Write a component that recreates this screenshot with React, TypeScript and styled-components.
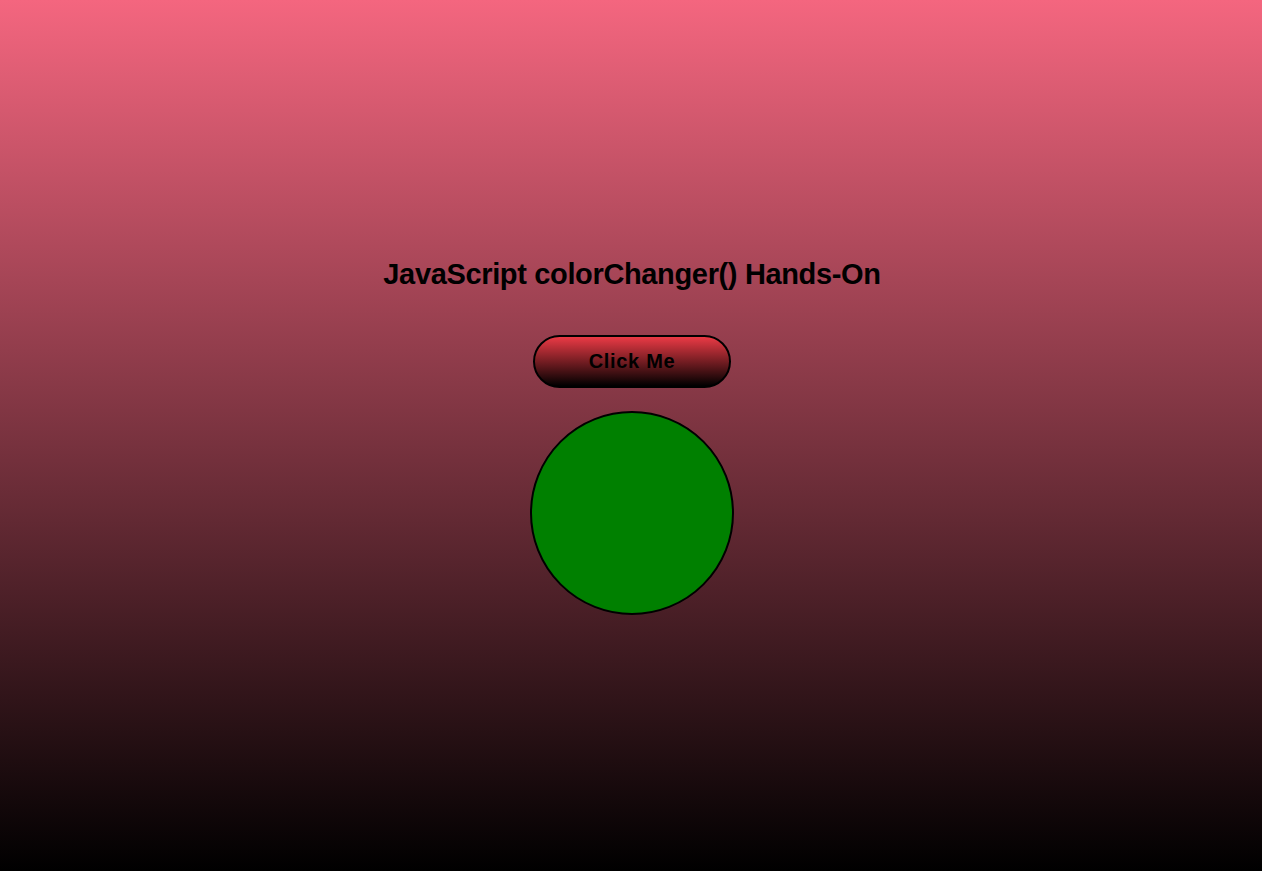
import React from "react";
import styled, { createGlobalStyle } from "styled-components";

const Global = createGlobalStyle`
  html, body { margin: 0; padding: 0; }
  body {
    min-height: 100vh;
    background: linear-gradient(to bottom, #f4667f 0%, #000000 100%);
    font-family: "Liberation Sans", Arial, sans-serif;
  }
`;

const Page = styled.main`
  box-sizing: border-box;
  min-height: 100vh;
  padding: 2px 0 0 2px;
  display: flex;
  flex-direction: column;
  align-items: center;
  justify-content: center;
`;

const Title = styled.h1`
  margin: 0 0 44px;
  font-family: "Liberation Sans", Arial, sans-serif;
  font-weight: 700;
  font-size: 29px;
  letter-spacing: -0.35px;
  color: #000;
`;

const Button = styled.button`
  width: 198px;
  height: 53px;
  border: 2px solid #000;
  border-radius: 27px;
  background: linear-gradient(to bottom, #ea3a45 0%, #000000 100%);
  font-family: "Liberation Sans", Arial, sans-serif;
  font-weight: 700;
  font-size: 20px;
  letter-spacing: 0.7px;
  color: #000;
  cursor: pointer;
  margin-bottom: 23px;
`;

const Circle = styled.div`
  width: 200px;
  height: 200px;
  border-radius: 50%;
  border: 2px solid #000;
  background: #008000;
`;

export default function App() {
  return (
    <>
      <Global />
      <Page>
        <Title>JavaScript colorChanger() Hands-On</Title>
        <Button>Click Me</Button>
        <Circle />
      </Page>
    </>
  );
}
